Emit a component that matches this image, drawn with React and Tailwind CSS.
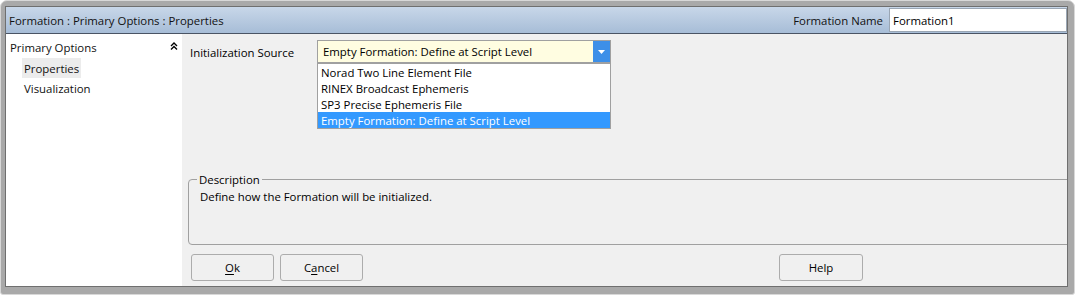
import React from "react";

const font = { fontFamily: '"Open Sans", "Noto Sans", sans-serif' };

function Btn({ children, className = "" }) {
  return (
    <div
      className={
        "h-[27px] w-[83px] flex items-center justify-center pt-[1px] rounded-[3px] border border-[#acacac] bg-[#f0f0f0] text-[11.4px] text-black " +
        className
      }
    >
      {children}
    </div>
  );
}

export default function App() {
  return (
    <div className="w-[1075px] h-[295px] bg-white" style={font}>
      <div className="w-full h-full rounded-t-[7px] rounded-b-[3px] border border-[#d8d8d8] bg-[#a9a9a9] pt-[5px] pl-[4px] pr-[6px] pb-[7px] flex flex-col">
        <div className="flex-1 flex flex-col border border-[#6f6f6f] overflow-hidden bg-[#f0f0f0]">
          {/* Header */}
          <div className="h-[27px] shrink-0 flex items-center bg-gradient-to-b from-[#c8d7e9] to-[#a7bdd7] border-b border-[#4a5464] pl-[3px]">
            <span className="text-[11.4px] text-[#111] leading-[16px] pt-[2px]">
              Formation : Primary Options : Properties
            </span>
            <span className="ml-auto text-[11.4px] text-[#111] leading-[16px] mr-[6px] pt-[2px]">
              Formation Name
            </span>
            <div className="w-[178px] h-[24px] bg-white border border-[#9aa6b4] flex items-center pl-[3px] pt-[1px] text-[11.4px] text-black">
              Formation1
            </div>
          </div>

          {/* Body */}
          <div className="flex-1 flex min-h-0">
            {/* Left tree */}
            <div className="w-[176px] shrink-0 bg-white pt-[6px] text-[11.4px] leading-[16px] text-[#111]">
              <div className="flex items-center pl-[4px] pr-[4px]">
                <span>Primary Options</span>
                <svg
                  className="ml-auto mt-[-4px]"
                  width="8"
                  height="8"
                  viewBox="0 0 8 8"
                  fill="none"
                  stroke="#000"
                  strokeWidth="1.4"
                >
                  <path d="M1 4 L4 1 L7 4" />
                  <path d="M1 7.5 L4 4.5 L7 7.5" />
                </svg>
              </div>
              <div className="mt-[2px] ml-[16px] flex flex-col items-start">
                <div className="h-[20px] px-[2px] pt-[2px] flex items-center bg-[#ececec]">
                  Properties
                </div>
                <div className="h-[20px] px-[2px] pt-[2px] flex items-center">
                  Visualization
                </div>
              </div>
            </div>

            {/* Right panel */}
            <div className="flex-1 flex flex-col bg-[#f0f0f0] text-[11.4px] leading-[16px] text-black">
              <div className="mt-[6px] flex items-center h-[23px]">
                <span className="w-[135px] pl-[8px] pt-[3px] shrink-0">Initialization Source</span>
                <div className="relative w-[294px] h-[23px]">
                  <div className="w-full h-full flex border border-[#a0a0a0] bg-[#fffde1]">
                    <div className="flex-1 flex items-center pl-[5px] pt-[1px]">
                      Empty Formation: Define at Script Level
                    </div>
                    <div className="w-[17px] bg-[#3d8fe8] flex items-center justify-center">
                      <svg width="7" height="4" viewBox="0 0 7 4">
                        <path d="M0 0 H7 L3.5 4 Z" fill="#fff" />
                      </svg>
                    </div>
                  </div>
                  <div className="absolute left-0 top-[23px] w-[294px] bg-white border border-[#a0a0a0] flex flex-col">
                    <div className="h-[16px] flex items-center pl-[3px] pt-[1px]">Norad Two Line Element File</div>
                    <div className="h-[16px] flex items-center pl-[3px] pt-[1px]">RINEX Broadcast Ephemeris</div>
                    <div className="h-[16px] flex items-center pl-[3px] pt-[1px]">SP3 Precise Ephemeris File</div>
                    <div className="h-[16px] flex items-center pl-[3px] pt-[1px] bg-[#3399ff] text-white">
                      Empty Formation: Define at Script Level
                    </div>
                  </div>
                </div>
              </div>

              <fieldset className="mt-[108px] ml-[6px] mr-[-12px] h-[74px] border border-[#a0a0a0] rounded-[4px]">
                <legend className="ml-[8px] px-[2px] leading-[14px] pt-[2px]">Description</legend>
                <div className="mt-[2px] pl-[11px]">
                  Define how the Formation will be initialized.
                </div>
              </fieldset>

              <div className="mt-[9px] flex ml-[9px]">
                <Btn>
                  <span className="underline underline-offset-2">O</span>k
                </Btn>
                <Btn className="ml-[6px]">
                  C<span className="underline underline-offset-2">a</span>ncel
                </Btn>
                <Btn className="ml-[416px] w-[84px]">Help</Btn>
              </div>
            </div>
          </div>
        </div>
      </div>
    </div>
  );
}
